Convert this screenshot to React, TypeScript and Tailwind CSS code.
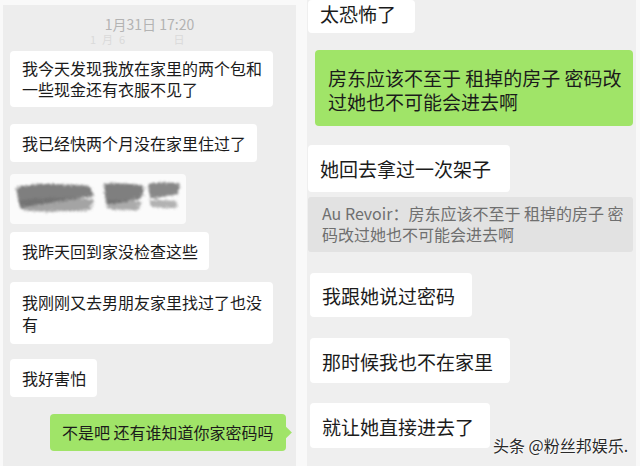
import React from 'react';

const font = { fontFamily: '"Noto Sans CJK SC", "Noto Sans", sans-serif' };

// blurred scribble that hides a message
const Scribble: React.FC = () => (
  <svg width="176" height="50" viewBox="0 0 176 50">
    <defs>
      <filter id="smudge" x="-10%" y="-30%" width="120%" height="160%">
        <feTurbulence type="fractalNoise" baseFrequency="0.9" numOctaves="2" result="noise" />
        <feDisplacementMap in="SourceGraphic" in2="noise" scale="6" result="d" />
        <feGaussianBlur in="d" stdDeviation="1.2" />
      </filter>
    </defs>
    <rect x="0" y="0" width="176" height="50" rx="4" fill="#fbfbfb" />
    <g filter="url(#smudge)" fill="#6a6a6a">
      <path d="M6 14 C20 8 50 10 80 12 L84 22 C60 26 30 30 10 34 Z" opacity="0.85" />
      <path d="M10 26 C30 24 60 22 84 26 L80 36 C50 38 24 38 12 36 Z" opacity="0.6" />
      <path d="M94 10 C110 8 124 10 134 12 L132 24 C118 28 104 30 96 30 Z" opacity="0.85" />
      <path d="M98 26 C110 26 124 26 132 28 L128 36 C114 36 102 36 96 34 Z" opacity="0.55" />
      <path d="M138 10 C148 8 160 8 170 10 L168 20 C158 22 146 24 140 24 Z" opacity="0.8" />
      <path d="M140 26 C150 26 162 26 168 28 L166 34 C156 34 146 34 140 32 Z" opacity="0.5" />
    </g>
  </svg>
);

const Bubble: React.FC<{ className?: string; children: React.ReactNode }> = ({ className = '', children }) => (
  <div className={`self-start whitespace-nowrap rounded-[4px] bg-white pl-3 pr-[11px] text-[#1b1b1b] ${className}`}>{children}</div>
);

export default function App() {
  return (
    <div className="flex h-[466px] w-[640px] overflow-hidden bg-[#f9f9f9]" style={font}>
      {/* left screenshot */}
      <div className="ml-[3px] mt-[5px] flex w-[293px] shrink-0 flex-col bg-[#ededed] px-[7px] text-[16px]">
        <div className="mt-[11px] text-center text-[14px] leading-[16px] text-[#b3b3b3]">1月31日 17:20</div>
        <div className="pl-[80px] text-[11px] leading-[14px] tracking-[6px] text-[#dadada]">1月6 &nbsp;&nbsp;&nbsp;&nbsp;日</div>
        <Bubble className="mt-[5px] py-[7px] leading-[21px]">
          我今天发现我放在家里的两个包和
          <br />
          一些现金还有衣服不见了
        </Bubble>
        <Bubble className="mt-[17px] py-[9px] leading-[20px]">我已经快两个月没在家里住过了</Bubble>
        <div className="mt-[12px]">
          <Scribble />
        </div>
        <Bubble className="mt-[8px] py-[9px] leading-[20px]">我昨天回到家没检查这些</Bubble>
        <Bubble className="mt-[12px] py-[9px] leading-[22px]">
          我刚刚又去男朋友家里找过了也没
          <br />
          有
        </Bubble>
        <Bubble className="mt-[15px] py-[9px] leading-[20px]">我好害怕</Bubble>
        <div className="relative mt-[17px] ml-[40px] self-start whitespace-nowrap rounded-[4px] bg-[#a0e468] px-3 py-[8px] leading-[21px] text-[#1b1b1b]">
          不是吧 还有谁知道你家密码吗
          <span className="absolute right-[-4px] top-[14px] h-[9px] w-[9px] rotate-45 bg-[#a0e468]" />
        </div>
      </div>

      {/* right screenshot */}
      <div className="relative ml-[11px] flex w-[329px] shrink-0 flex-col bg-[#efefef] pr-[3px] text-[19px]">
        <Bubble className="ml-[1px] w-[107px] pb-[8px] pt-[3px] leading-[22px]">太恐怖了</Bubble>
        <div className="ml-[8px] mt-[17px] whitespace-nowrap rounded-[4px] bg-[#a0e468] pb-[12px] pl-[13px] pr-2 pt-[16px] leading-[24px] text-[#1b1b1b]">
          房东应该不至于 租掉的房子 密码改
          <br />
          过她也不可能会进去啊
        </div>
        <Bubble className="ml-[1px] mt-[19px] w-[202px] pb-[11px] pt-[12px] leading-[24px]">她回去拿过一次架子</Bubble>
        <div className="ml-[1px] mt-[5px] whitespace-nowrap rounded-[3px] bg-[#e2e2e2] pl-[14px] pb-[7px] pt-[6px] text-[16px] leading-[21px] text-[#6f6f6f]">
          Au Revoir：房东应该不至于 租掉的房子 密
          <br />
          码改过她也不可能会进去啊
        </div>
        <Bubble className="ml-[3px] mt-[21px] w-[162px] pb-[9px] pt-[11px] leading-[24px]">我跟她说过密码</Bubble>
        <Bubble className="ml-[3px] mt-[21px] w-[200px] pb-[9px] pt-[12px] leading-[24px]">那时候我也不在家里</Bubble>
        <Bubble className="ml-[3px] mt-[20px] w-[180px] pb-[9px] pt-[12px] leading-[24px]">就让她直接进去了</Bubble>

        <div className="absolute left-[186px] top-[434px] whitespace-nowrap text-[16px] leading-[22px] text-[#2a2a2a] [text-shadow:0_0_2px_#fff,0_0_2px_#fff]">
          头条 @粉丝邦娱乐.
        </div>
      </div>
    </div>
  );
}
